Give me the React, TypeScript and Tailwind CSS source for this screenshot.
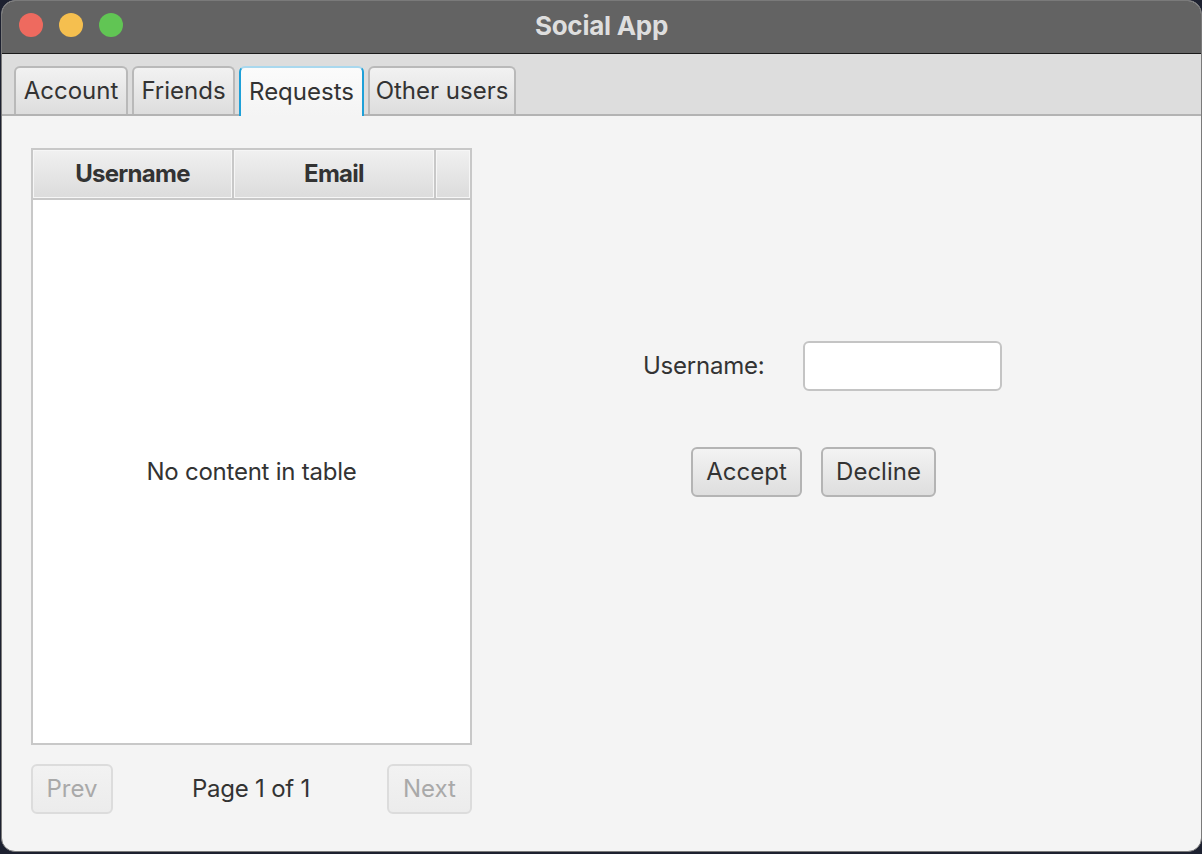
import React from 'react';

const font = { fontFamily: 'Inter, "Noto Sans", sans-serif' };

const Tab: React.FC<{ label: string; width: string; active?: boolean }> = ({ label, width, active }) => (
  <div
    className={
      active
        ? `${width} h-[50px] -mb-[2px] flex items-center justify-center rounded-t-[6px] border-x-2 border-t-2 border-x-[#1ea0d8] border-t-[#a9d8ee] bg-gradient-to-b from-[#fbfbfb] to-[#f4f4f4] text-[24px] text-[#333333]`
        : `${width} h-[48px] flex items-center justify-center rounded-t-[6px] border-x-2 border-t-2 border-[#b9b9b9] bg-gradient-to-b from-[#f2f2f2] to-[#dddddd] text-[24px] text-[#333333]`
    }
  >
    {label}
  </div>
);

const Button: React.FC<{ label: string; width: string; disabled?: boolean }> = ({ label, width, disabled }) => (
  <div
    className={
      disabled
        ? `${width} h-[50px] flex items-center justify-center rounded-[6px] border-2 border-[#dcdcdc] bg-gradient-to-b from-[#f2f2f2] to-[#ececec] text-[24px] text-[#a9a9a9]`
        : `${width} h-[50px] flex items-center justify-center rounded-[6px] border-2 border-[#b4b4b4] bg-gradient-to-b from-[#f3f3f3] to-[#dedede] text-[24px] text-[#333333]`
    }
  >
    {label}
  </div>
);

const App: React.FC = () => {
  return (
    <div className="w-[1202px] h-[854px] bg-[#1d2130] pl-[1px] pb-[2px] flex" style={font}>
      <div className="flex-1 flex flex-col rounded-[14px] overflow-hidden border border-[#7a7a7a] bg-[#f4f4f4]">
        {/* title bar */}
        <div className="relative h-[53px] shrink-0 bg-[#636363] border-b border-[#1a1a1a] flex items-center pb-[4px]">
          <div className="flex gap-[16px] pl-[17px]">
            <span className="w-[24px] h-[24px] rounded-full bg-[#ee6a5f]" />
            <span className="w-[24px] h-[24px] rounded-full bg-[#f5bf4f]" />
            <span className="w-[24px] h-[24px] rounded-full bg-[#61c554]" />
          </div>
          <div className="absolute inset-0 pb-[4px] flex items-center justify-center text-[26px] font-bold text-[#dedede] tracking-[-0.01em]">
            Social App
          </div>
        </div>

        {/* tab bar */}
        <div className="h-[62px] shrink-0 bg-[#dddddd] border-b-2 border-[#b3b3b3] flex items-end gap-[4px] pl-[12px]">
          <Tab label="Account" width="w-[114px]" />
          <Tab label="Friends" width="w-[103px]" />
          <Tab label="Requests" width="w-[125px]" active />
          <Tab label="Other users" width="w-[148px]" />
        </div>

        {/* content */}
        <div className="flex-1 flex pl-[29px] pt-[32px]">
          <div className="w-[441px] flex flex-col">
            <div className="h-[597px] border-2 border-[#c8c8c8] bg-white flex flex-col">
              <div className="h-[50px] shrink-0 flex border-b-2 border-[#c8c8c8] bg-[#c8c8c8] gap-[2px]">
                <div className="w-[199px] flex items-center justify-center bg-gradient-to-b from-[#f0f0f0] to-[#dcdcdc] border border-[#f6f6f6] text-[24px] font-bold tracking-[-0.03em] text-[#333333]">
                  Username
                </div>
                <div className="w-[200px] flex items-center justify-center bg-gradient-to-b from-[#f0f0f0] to-[#dcdcdc] border border-[#f6f6f6] text-[24px] font-bold tracking-[-0.03em] text-[#333333]">
                  Email
                </div>
                <div className="flex-1 bg-gradient-to-b from-[#f0f0f0] to-[#dcdcdc] border border-[#f6f6f6]" />
              </div>
              <div className="flex-1 flex items-center justify-center text-[24px] text-[#333333] tracking-[-0.01em]">
                No content in table
              </div>
            </div>
            <div className="mt-[19px] flex items-center justify-between">
              <Button label="Prev" width="w-[82px]" disabled />
              <span className="text-[24px] text-[#333333] tracking-[-0.01em] pl-[2px]">Page 1 of 1</span>
              <Button label="Next" width="w-[85px]" disabled />
            </div>
          </div>

          <div className="flex-1 flex flex-col pt-[193px]">
            <div className="flex items-center pl-[171px]">
              <span className="w-[160px] text-[24px] text-[#333333] tracking-[-0.01em]">Username:</span>
              <div className="w-[199px] h-[50px] rounded-[6px] border-2 border-[#c4c4c4] bg-white" />
            </div>
            <div className="flex gap-[19px] pl-[219px] mt-[56px]">
              <Button label="Accept" width="w-[111px]" />
              <Button label="Decline" width="w-[115px]" />
            </div>
          </div>
        </div>
      </div>
    </div>
  );
};

export default App;
